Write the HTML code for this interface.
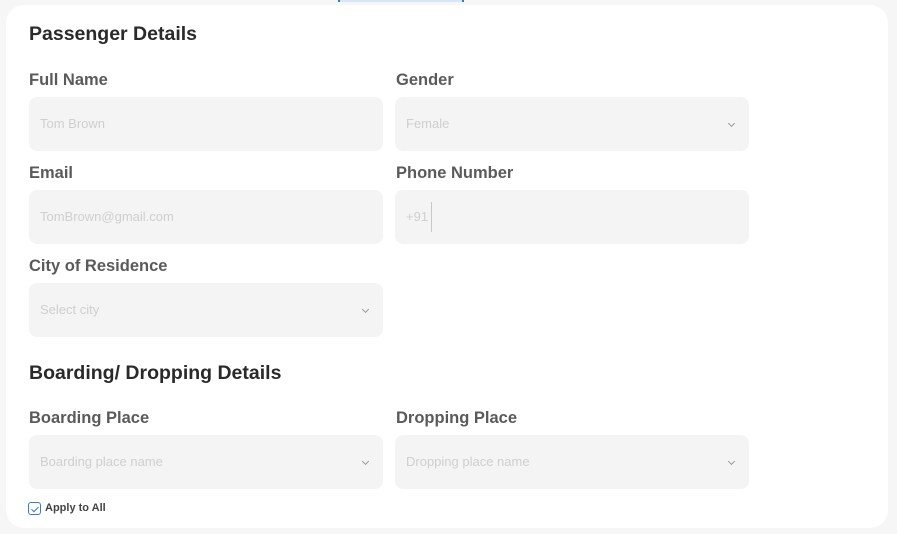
<!DOCTYPE html>
<html><head><meta charset="utf-8"><style>
*{margin:0;padding:0;box-sizing:border-box}
body{width:897px;height:534px;background:#f6f6f6;font-family:"Liberation Sans",sans-serif;position:relative;overflow:hidden}
.card{position:absolute;left:6px;top:5px;width:882px;height:523px;background:#fff;border-radius:18px}
.topline{position:absolute;left:338px;top:0;width:126px;height:2px;background:#d6e6f5;border-left:2px solid #3a7bc0;border-right:2px solid #3a7bc0}
h2{position:absolute;left:29px;font-size:19.5px;font-weight:bold;color:#2a2a2a}
.lbl{position:absolute;font-size:16.5px;font-weight:bold;color:#5a5a5a}
.in{position:absolute;width:354px;height:54px;background:#f4f4f4;border-radius:8px;font-size:13px;color:#cfcfcf;padding-left:11px;line-height:54px}
.chev{position:absolute;right:15px;top:24px;width:5px;height:5px;border-right:1px solid #999;border-bottom:1px solid #999;transform:rotate(45deg)}
.cb{position:absolute;left:28px;top:502px;width:13px;height:13px;border:1.5px solid #3a7bc0;border-radius:3px}
.cb:after{content:"";position:absolute;left:3.5px;top:1.5px;width:3px;height:6px;border-right:1px solid #3a7bc0;border-bottom:1px solid #3a7bc0;transform:rotate(45deg)}
</style></head><body>
<div class="topline"></div>
<div class="card"></div>
<h2 style="top:23px">Passenger Details</h2>
<div class="lbl" style="left:29px;top:71px">Full Name</div>
<div class="lbl" style="left:396px;top:71px">Gender</div>
<div class="in" style="left:29px;top:97px">Tom Brown</div>
<div class="in" style="left:395px;top:97px">Female<span class="chev"></span></div>
<div class="lbl" style="left:29px;top:164px">Email</div>
<div class="lbl" style="left:396px;top:164px">Phone Number</div>
<div class="in" style="left:29px;top:190px">TomBrown@gmail.com</div>
<div class="in" style="left:395px;top:190px">+91<span style="position:absolute;left:36px;top:12px;width:1px;height:30px;background:#c8c8c8"></span></div>
<div class="lbl" style="left:29px;top:257px">City of Residence</div>
<div class="in" style="left:29px;top:283px">Select city<span class="chev"></span></div>
<h2 style="top:362px">Boarding/ Dropping Details</h2>
<div class="lbl" style="left:29px;top:409px">Boarding Place</div>
<div class="lbl" style="left:396px;top:409px">Dropping Place</div>
<div class="in" style="left:29px;top:435px">Boarding place name<span class="chev"></span></div>
<div class="in" style="left:395px;top:435px">Dropping place name<span class="chev"></span></div>
<div class="cb"></div>
<div style="position:absolute;left:45px;top:502px;font-size:11px;font-weight:bold;color:#444">Apply to All</div>
</body></html>
